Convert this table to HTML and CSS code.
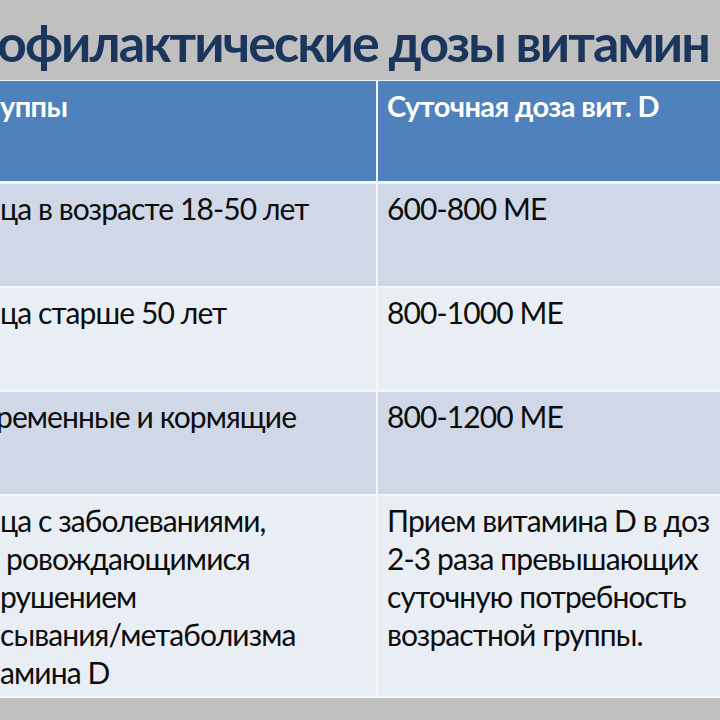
FILE: index.html
```html
<!DOCTYPE html>
<html lang="ru">
<head>
<meta charset="utf-8">
<link rel="stylesheet" href="styles.css">
</head>
<body>
<div class="slide">
  <h1 class="title">офилактические дозы витамин</h1>
  <div class="table">
    <div class="cell head c1">уппы</div>
    <div class="cell head c2">Суточная доза вит. D</div>
    <div class="cell odd c1">ца в возрасте 18-50 лет</div>
    <div class="cell odd c2">600-800 МЕ</div>
    <div class="cell even c1">ца старше 50 лет</div>
    <div class="cell even c2">800-1000 МЕ</div>
    <div class="cell odd c1"><span class="cut">ременные и кормящие</span></div>
    <div class="cell odd c2">800-1200 МЕ</div>
    <div class="cell even c1 tall">ца с заболеваниями,<br><span class="ind">ровождающимися</span><br>рушением<br>сывания/метаболизма<br>амина D</div>
    <div class="cell even c2 tall">Прием витамина D в доз<br>2-3 раза превышающих<br>суточную потребность<br>возрастной группы.</div>
  </div>
</div>
</body>
</html>
```

FILE: styles.css
```css
html, body {
  margin: 0;
  padding: 0;
}
body {
  width: 720px;
  height: 720px;
  overflow: hidden;
  background: #bfbfbf;
  font-family: Lato, "Noto Sans", sans-serif;
}
.slide {
  width: 720px;
  height: 720px;
  overflow: hidden;
  background: #c0c0c0;
}
.title {
  margin: 0 0 0 -3px;
  height: 80px;
  box-sizing: border-box;
  padding-top: 12px;
  font-size: 52px;
  line-height: 60px;
  font-weight: 700;
  color: #1b365d;
  white-space: nowrap;
  letter-spacing: -1.9px;
}
.table {
  display: grid;
  grid-template-columns: 376px 342px;
  grid-template-rows: 101px 102px 102px 102px 200px;
  column-gap: 2px;
  row-gap: 2px;
  background: #f4f6fa;
  border-top: 1px solid #eef2f8;
  border-bottom: 2px solid #f4f6fa;
}
.cell {
  box-sizing: border-box;
  white-space: nowrap;
  overflow: hidden;
  color: #0d0d0d;
  font-size: 30px;
  line-height: 38px;
  letter-spacing: -0.9px;
  padding-top: 5px;
}
.c1 { padding-left: 0; }
.c2 { padding-left: 9px; }
.head {
  background: #4f81bd;
  color: #fff;
  font-weight: 700;
  font-size: 29px;
  letter-spacing: -0.6px;
  padding-top: 6px;
}
.head.c1, .head.c2 { margin-bottom: 1px; }
.odd { background: #d0d8e8; }
.even { background: #e9edf4; }
.ind { padding-left: 6px; }
.cut { margin-left: -4px; }
```
